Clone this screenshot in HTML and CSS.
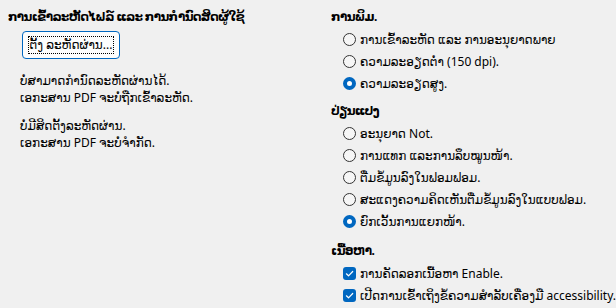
FILE: index.html
```html
<!DOCTYPE html>
<html lang="lo">
<head>
<meta charset="utf-8">
<link rel="stylesheet" href="styles.css">
</head>
<body>
<div class="page">
  <div class="col-left">
    <div class="heading">ການເຂົ້າລະຫັດໄຟລ໌ ແລະ ການກຳນົດສິດຜູ້ໃຊ້</div>
    <button class="btn"><span class="focus">ຕັ້ງ ລະຫັດຜ່ານ...</span></button>
    <p class="note">ບໍ່ສາມາດກຳນົດລະຫັດຜ່ານໄດ້.<br>ເອກະສານ PDF ຈະບໍ່ຖືກເຂົ້າລະຫັດ.</p>
    <p class="note">ບໍ່ມີສິດຕັ້ງລະຫັດຜ່ານ.<br>ເອກະສານ PDF ຈະບໍ່ຈຳກັດ.</p>
  </div>
  <div class="col-right">
    <div class="heading">ການພິມ.</div>
    <div class="group">
      <div class="row"><span class="radio"></span><span>ການເຂົ້າລະຫັດ ແລະ ການອະນຸຍາດພາຍ</span></div>
      <div class="row"><span class="radio"></span><span>ຄວາມລະອຽດຕ່ຳ (150 dpi).</span></div>
      <div class="row"><span class="radio on"></span><span>ຄວາມລະອຽດສູງ.</span></div>
    </div>
    <div class="heading sec">ປ່ຽນແປງ</div>
    <div class="group">
      <div class="row"><span class="radio"></span><span>ອະນຸຍາດ Not.</span></div>
      <div class="row"><span class="radio"></span><span>ການແທກ ແລະການລຶບໝູນໜ້າ.</span></div>
      <div class="row"><span class="radio"></span><span>ຕື່ມຂໍ້ມູນລົງໃນຟອມຟອມ.</span></div>
      <div class="row"><span class="radio"></span><span>ສະແດງຄວາມຄິດເຫັນຕື່ມຂໍ້ມູນລົງໃນແບບຟອມ.</span></div>
      <div class="row"><span class="radio on"></span><span>ຍົກເວັ້ນການແຍກໜ້າ.</span></div>
    </div>
    <div class="heading sec sec3">ເນື້ອຫາ.</div>
    <div class="group">
      <div class="row"><span class="check"><svg viewBox="0 0 13 13" width="13" height="13"><path d="M3.4 6.8 L5.5 8.8 L9.7 4.5" fill="none" stroke="#fff" stroke-width="1.2" stroke-linecap="round" stroke-linejoin="round"/></svg></span><span>ການຄັດລອກເນື້ອຫາ Enable.</span></div>
      <div class="row"><span class="check"><svg viewBox="0 0 13 13" width="13" height="13"><path d="M3.4 6.8 L5.5 8.8 L9.7 4.5" fill="none" stroke="#fff" stroke-width="1.2" stroke-linecap="round" stroke-linejoin="round"/></svg></span><span>ເປີດການເຂົ້າເຖິງຂໍ້ຄວາມສຳລັບເຄື່ອງມື accessibility.</span></div>
    </div>
  </div>
</div>
</body>
</html>
```
FILE: styles.css
```css
html, body {
  margin: 0;
  padding: 0;
  background: #f0f0f0;
}
body {
  font-family: "Segoe UI", "Noto Sans", "DejaVu Sans", sans-serif;
  font-size: 12px;
  color: #000;
  width: 616px;
  height: 308px;
  overflow: hidden;
}
.page {
  display: flex;
  padding: 9px 0 0 8px;
}
.col-left {
  width: 326px;
  display: flex;
  flex-direction: column;
  align-items: flex-start;
}
.col-right {
  display: flex;
  flex-direction: column;
}
.heading {
  font-weight: bold;
  line-height: 16px;
  height: 16px;
  white-space: nowrap;
  letter-spacing: -0.6px;
}
.heading.sec {
  margin-top: 9px;
}
.heading.sec3 {
  margin-top: 11px;
}
.btn {
  margin: 6px 0 0 14px;
  width: 98px;
  height: 28px;
  background: #fdfdfd;
  border: 1px solid #0067c0;
  border-radius: 4px;
  font: inherit;
  color: #000;
  padding: 0;
  display: flex;
  align-items: center;
  justify-content: center;
}
.focus {
  outline: 1px dotted #000;
  padding: 0 1px;
  line-height: 16px;
}
.note {
  margin: 13px 0 0 12px;
  line-height: 17px;
}
.note + .note {
  margin-top: 11px;
}
.group {
  margin-top: 3px;
  display: flex;
  flex-direction: column;
  padding-left: 12px;
}
.row {
  height: 22px;
  display: flex;
  align-items: center;
  gap: 4px;
  white-space: nowrap;
}
.radio {
  width: 13px;
  height: 13px;
  border: 1px solid #333;
  border-radius: 50%;
  background: #f6f6f6;
  box-sizing: border-box;
  flex: none;
}
.radio.on {
  border: 4px solid #0067c0;
  background: #fff;
}
.check {
  width: 13px;
  height: 13px;
  border-radius: 3px;
  background: #0067c0;
  flex: none;
  display: flex;
}
```
